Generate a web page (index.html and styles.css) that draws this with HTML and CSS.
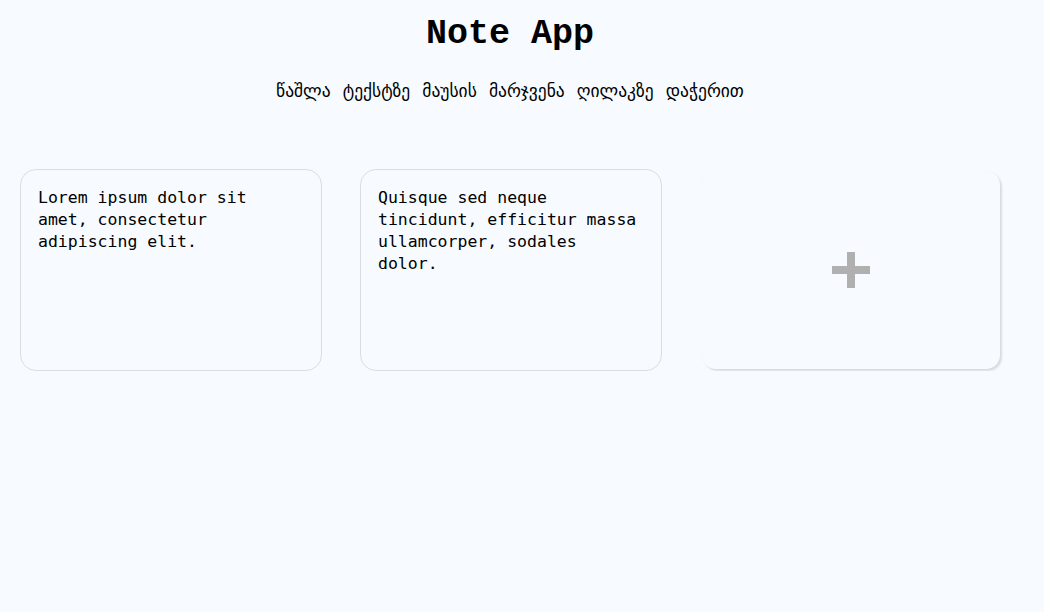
FILE: index.html
```html
<!DOCTYPE html>
<html lang="ka">
<head>
<meta charset="utf-8">
<title>Note App</title>
<link rel="stylesheet" href="styles.css">
</head>
<body>
<div class="app">
  <h1 class="title">Note App</h1>
  <p class="hint">წაშლა ტექსტზე მაუსის მარჯვენა ღილაკზე დაჭერით</p>
  <div class="notes">
    <textarea class="note" spellcheck="false">Lorem ipsum dolor sit amet, consectetur adipiscing elit.</textarea>
    <textarea class="note" spellcheck="false">Quisque sed neque tincidunt, efficitur massa ullamcorper, sodales dolor.</textarea>
    <button class="add-note" aria-label="Add note">
      <svg width="38" height="36" viewBox="0 0 38 36"><rect x="15" y="0" width="8" height="36" fill="#b0b0b0"/><rect x="0" y="14" width="38" height="8" fill="#b0b0b0"/></svg>
    </button>
  </div>
</div>
</body>
</html>
```
FILE: styles.css
```css
html, body {
  margin: 0;
  padding: 0;
  background: #f7fbff;
}
.app {
  width: 1020px;
}
.title {
  margin: 0;
  padding-top: 14px;
  text-align: center;
  font-family: "Liberation Mono", "Courier New", monospace;
  font-weight: bold;
  font-size: 35px;
  line-height: 40px;
  color: #000;
}
.hint {
  margin: 27px 0 0;
  text-align: center;
  font-family: "DejaVu Sans", sans-serif;
  font-size: 17.5px;
  line-height: 20px;
  word-spacing: 6.5px;
  color: #000;
}
.notes {
  display: flex;
  align-items: flex-start;
  padding: 68px 0 0 20px;
}
.note {
  box-sizing: border-box;
  width: 302px;
  height: 202px;
  margin: 0 38px 0 0;
  padding: 17px 17px;
  border: 1px solid #dadee3;
  border-radius: 16px;
  background: #f7fbff;
  resize: none;
  outline: none;
  font-family: "DejaVu Sans Mono", monospace;
  font-size: 16.5px;
  line-height: 22px;
  color: #000;
  overflow: hidden;
}
.add-note {
  box-sizing: border-box;
  width: 298px;
  height: 198px;
  margin: 2px 0 0 2px;
  border: none;
  border-radius: 14px;
  background: #f7fbff;
  box-shadow: 2px 2px 2px rgba(0, 0, 0, 0.12), 0 0 1px rgba(0,0,0,0.05);
  display: flex;
  align-items: center;
  justify-content: center;
  padding: 0;
  cursor: pointer;
}
```
